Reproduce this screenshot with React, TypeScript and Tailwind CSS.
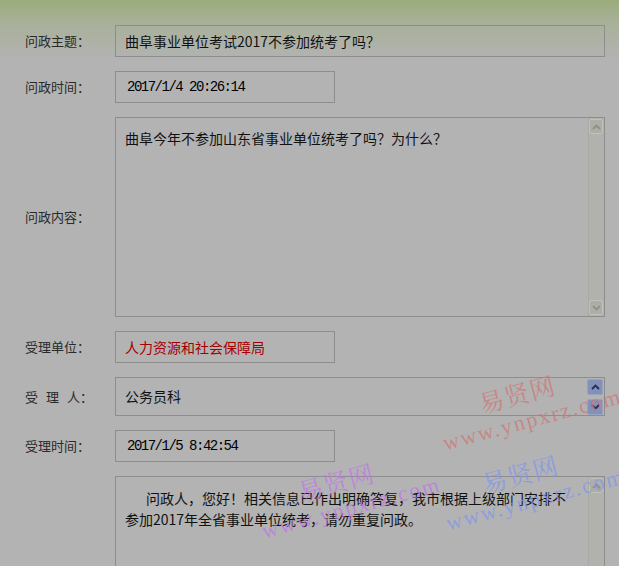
import React from "react";

const cjk = { fontFamily: '"Noto Sans CJK SC", "Noto Sans", sans-serif' };
const mono = { fontFamily: '"Liberation Mono", "Noto Sans CJK SC", monospace' };
const serif = { fontFamily: '"Liberation Serif", "Noto Serif CJK SC", "Noto Sans CJK SC", serif' };

const Label = ({ children }: { children: React.ReactNode }) => (
    <div className="w-[90px] shrink-0 text-[13px] text-[#2a2a2a] whitespace-pre">{children}</div>
);

const Chevron = ({ down, color }: { down?: boolean; color: string }) => (
    <svg width="9" height="6" viewBox="0 0 9 6">
        <path d={down ? "M1 1 L4.5 4.5 L8 1" : "M1 5 L4.5 1.5 L8 5"} fill="none" stroke={color} strokeWidth="1.8" />
    </svg>
);

const ScrollBar = ({ full }: { full?: boolean }) => (
    <div className="w-[16px] shrink-0 flex flex-col justify-between border-l border-[#a9aaa6] bg-[#b1b2ae] py-[1px] pr-[1px]">
        <div className="h-[15px] flex items-center justify-center border border-[#c0c1bb] rounded-[2px] bg-[#adafa7]">
            <Chevron color="#8e918a" />
        </div>
        {full && (
            <div className="h-[15px] flex items-center justify-center border border-[#c0c1bb] rounded-[2px] bg-[#adafa7]">
                <Chevron down color="#8e918a" />
            </div>
        )}
    </div>
);

const Watermark = ({ top, left, color }: { top: number; left: number; color: string }) => (
    <div
        className="absolute pointer-events-none -rotate-[15deg] origin-top-left"
        style={{ top, left, color, ...serif }}
    >
        <div className="text-[25px] leading-none ml-[45px] tracking-[1px]">易贤网</div>
        <div className="text-[22px] leading-none mt-[4px] tracking-[2px]">www.ynpxrz.com</div>
    </div>
);

const Stamp = ({ children }: { children: string }) => (
    <div className="w-[220px] h-[32px] flex items-center border border-[#8d8d8d] pl-[11px] text-[14px] tracking-[-1.5px] text-black" style={mono}>
        {children}
    </div>
);

export default function App() {
    return (
        <div
            className="relative w-[619px] h-[566px] overflow-hidden bg-[linear-gradient(to_bottom,#9bac7c_0px,#a8b098_22px,#b3b3b3_60px)] text-[#111]"
            style={cjk}
        >
            <div className="flex flex-col gap-[14px] pt-[25px] pl-[25px] pr-[14px]">
                <div className="flex items-center">
                    <Label>问政主题：</Label>
                    <div className="flex-1 h-[32px] flex items-center border border-[#8d8d8d] pl-[9px] text-[14px]">
                        曲阜事业单位考试2017不参加统考了吗？
                    </div>
                </div>
                <div className="flex items-center">
                    <Label>问政时间：</Label>
                    <Stamp>2017/1/4 20:26:14</Stamp>
                </div>
                <div className="flex items-center">
                    <Label>问政内容：</Label>
                    <div className="flex-1 h-[200px] flex border border-[#8d8d8d]">
                        <div className="flex-1 pl-[9px] pt-[10px] text-[14px] leading-[20px]">
                            曲阜今年不参加山东省事业单位统考了吗？为什么？
                        </div>
                        <ScrollBar full />
                    </div>
                </div>
                <div className="flex items-center">
                    <Label>受理单位：</Label>
                    <div className="w-[220px] h-[32px] flex items-center border border-[#8d8d8d] pl-[9px] text-[14px] text-[#a50000]">
                        人力资源和社会保障局
                    </div>
                </div>
                <div className="flex items-center">
                    <Label>
                        <span className="mr-[8px]">受</span>
                        <span className="mr-[8px]">理</span>
                        <span>人：</span>
                    </Label>
                    <div className="flex-1 h-[39px] flex border border-[#8d8d8d]">
                        <div className="flex-1 flex items-center pl-[9px] text-[14px]">公务员科</div>
                        <div className="w-[17px] flex flex-col gap-[4px] pt-[1px] pr-[1px]">
                            <div className="h-[16px] flex items-center justify-center rounded-[2px] border border-[#9aa3bd] bg-[#8291b9]">
                                <Chevron color="#26304d" />
                            </div>
                            <div className="h-[16px] flex items-center justify-center rounded-[2px] border border-[#9aa3bd] bg-[#8291b9]">
                                <Chevron down color="#26304d" />
                            </div>
                        </div>
                    </div>
                </div>
                <div className="flex items-center">
                    <Label>受理时间：</Label>
                    <Stamp>2017/1/5 8:42:54</Stamp>
                </div>
                <div className="flex">
                    <div className="w-[90px] shrink-0" />
                    <div className="flex-1 h-[120px] flex border border-[#8d8d8d]">
                        <div className="flex-1 pl-[9px] pt-[11px] text-[14px] leading-[21px]">
                            <div className="pl-[21px]">问政人，您好！相关信息已作出明确答复，我市根据上级部门安排不</div>
                            <div>参加2017年全省事业单位统考，请勿重复问政。</div>
                        </div>
                        <ScrollBar />
                    </div>
                </div>
            </div>

            <Watermark top={405} left={433} color="rgba(205,120,120,0.75)" />
            <Watermark top={493} left={252} color="rgba(190,120,230,0.75)" />
            <Watermark top={485} left={436} color="rgba(130,150,235,0.75)" />
        </div>
    );
}
